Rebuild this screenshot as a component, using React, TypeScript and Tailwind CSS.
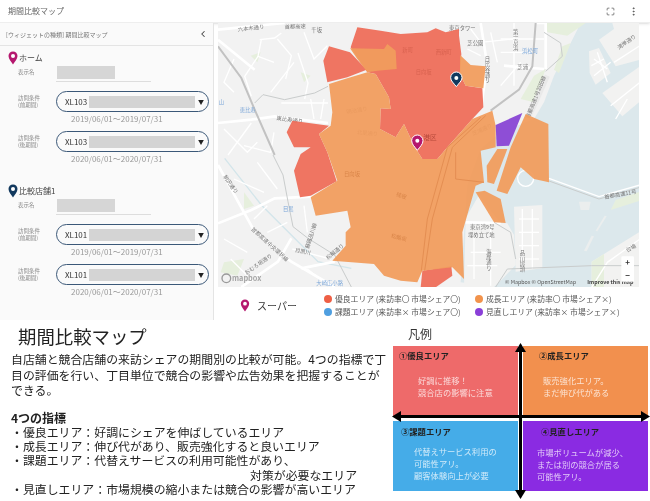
import { ChevronLeft, Maximize, MoreVertical } from "lucide-react";

const red = "#ee6c58";
const orange = "#f19c5c";

const redAreas = [
  "430,25 500,35 560,45 640,40 665,28 695,40 735,30 735,50 742,105 738,165 755,200 805,208 808,265 775,300 740,340 700,385 670,420 625,420 600,380 570,315 545,355 498,330 500,268 530,270 525,235 485,165 460,160 410,85",
  "345,82 408,100 458,152 400,175 340,190 328,125",
  "218,340 235,305 345,320 315,345 340,400 368,487 290,530 258,535 240,455 260,405 290,385 240,385",
  "625,755 712,742 715,770 665,805 620,805",
];

const orangeAreas = [
  "408,88 510,90 520,75 545,95 548,150 490,155 460,160 430,120",
  "738,108 770,138 815,142 808,208 755,200 738,165",
  "345,195 400,178 460,160 485,165 525,235 530,270 500,268 498,330 545,355 570,315 600,380 625,420 670,420 700,385 740,340 775,300 835,275 845,320 845,385 800,395 810,490 785,500 745,640 750,780 715,745 625,755 610,790 560,785 510,770 480,735 355,725 395,680 395,640 410,625 400,575 305,590 290,535 370,485 340,400 315,345 350,320 355,280",
  "935,285 1003,315 1005,490 960,480 920,445 880,525 848,515 890,385",
  "850,390 880,390 840,495 820,490 818,440",
  "785,520 812,515 860,540 875,612 840,610",
];

// thick white streets
const mainRoads = [
  "12,32 212,12",
  "12,312 112,302 182,292 342,312",
  "12,613 112,573 182,538 292,533",
  "12,438 72,548 122,638 232,728 362,804",
  "82,804 192,728 232,658",
  "965,12 995,12 995,150",
  "262,748 362,728",
  "12,62 122,152",
  "870,140 990,150",
  "755,610 860,612",
  "800,12 820,140 800,270",
];

// thin white side streets, just for the map's texture
const sideRoads = [
  "137,62 182,57 202,42",
  "132,112 92,172 112,232",
  "252,102 282,192 272,240",
  "202,252 342,252",
  "42,408 112,312",
  "142,62 132,112 180,130",
  "190,60 232,110 215,180",
  "270,40 300,120 340,80",
  "60,220 30,190 60,120",
  "180,340 170,400 90,380",
  "30,330 100,400 130,370",
  "290,240 300,300",
  "330,240 320,300",
  "240,130 170,220",
  "60,480 150,520",
  "30,660 100,700",
  "130,430 190,510",
  "120,600 160,560",
  "50,720 110,780",
  "160,640 220,610",
  "270,560 280,640",
  "235,690 350,720",
  "280,750 330,790",
  "860,60 990,60",
  "860,100 960,100",
  "900,12 900,200",
  "860,200 920,130",
  "770,30 800,70 900,60",
  "760,90 800,110",
  "830,40 850,130",
  "770,700 860,700",
  "780,650 780,780",
  "830,620 830,800",
  "760,740 850,740",
  "915,600 975,600",
  "915,640 975,640",
  "915,680 975,680",
  "915,720 975,720",
  "925,570 925,750",
  "955,570 955,750",
  "1005,478 1155,533 1278,498",
  "1140,120 1180,150",
  "1132,140 1170,120",
  "1140,170 1190,130",
  "1150,100 1180,190",
  "1130,810 1180,730 1278,660",
  "1200,130 1278,80",
  "1190,260 1278,190",
  "1205,300 1240,240",
];

const grayRoads = [
  "12,82 82,177 122,272 182,408",
  "965,12 955,142 915,212 830,275",
];

const thinGrayRoads = [
  "177,408 207,468 222,548 237,623 282,658 362,708 412,804",
  "122,252 147,227 212,242 302,222 342,202",
  "990,40 1040,72 1045,112 995,157",
  "845,804 880,750 1133,740 1278,740",
  "840,610 890,640 905,720",
  "1005,486 1155,540 1278,505",
];

const mapLabels: [string, number, number, number?][] = [
  ["六本木通り", 72, 38, -7],
  ["首都高速", 212, 30, -3],
  ["千坂", 292, 40],
  ["東比寿通り", 187, 302, 8],
  ["明治通り", 398, 285, -10],
  ["北里通り", 428, 345, 5],
  ["芝公園", 760, 78],
  ["東京タワー", 705, 32],
  ["芝浦", 910, 150],
  ["湾岸通り", 1215, 92, -35],
  ["首都高速11号", 1172, 540, -10],
  ["東京湾9号", 768, 630],
  ["埋め立て地", 762, 654],
  ["芝浦通り", 778, 350, -25],
  ["目黒川", 242, 698, 12],
  ["首都高速中央環状線", 110, 632, 42],
  ["蘇路品川線", 284, 690, -72],
  ["松輪通り", 342, 723, -40],
  ["駒沢通り", 27, 473, 55],
  ["おむろ坂通り", 97, 768, -35],
  ["首都高速1号羽田線", 945, 300, -68],
  ["台場", 1240, 700, -30],
];

const blueLabels: [string, number, number][] = [
  ["恵比寿", 77, 279],
  ["目黒", 207, 575],
  ["大崎広小路", 307, 798],
  ["浜松町", 924, 103],
  ["山", 14, 254],
];

const verticalLabels: [string, number, number][] = [
  ["第一京浜", 905, 30],
  ["海岸通り", 825, 690],
  ["品川埠頭", 925, 695],
  ["日比谷通り", 820, 112],
];

function Pin({ color, className }: { color: string; className: string }) {
  return (
    <svg viewBox="0 0 20 28" className={className}>
      <path
        d="M10 1C4.800 1 1 5 1 10c0 6 6 12 9 17 3-5 9-11 9-17 0-5-3.800-9-9-9z"
        fill={color}
      />
      <circle cx="10" cy="10" r="4" fill="#fff" />
    </svg>
  );
}

function Condition({
  label,
  code,
  date,
}: {
  label: string[];
  code: string;
  date: string;
}) {
  return (
    <div className="mt-[7px] pl-[18px] pr-[4px]">
      <div className="flex items-center">
        <div className="w-[38px] text-[5.500px] leading-[6.500px] text-[#888]">
          <div>{label[0]}</div>
          <div>{label[1]}</div>
        </div>
        <div className="flex h-[21px] w-[153px] items-center rounded-full border-[1.500px] border-[#3b5878] pl-[8px]">
          <span className="w-[24px] text-[8px] text-[#333]">{code}</span>
          <div className="h-[12px] w-[106px] bg-[#d4d4d4]" />
          <span className="ml-[3px] text-[6px] text-[#222]">▼</span>
        </div>
      </div>
      <div className="mt-[1px] pl-[53px] text-[8px] leading-[11px] text-[#999]">{date}</div>
    </div>
  );
}

function Store({
  name,
  color,
  code,
}: {
  name: string;
  color: string;
  code: string;
}) {
  return (
    <div>
      <div className="flex items-center pl-[8px]">
        <Pin color={color} className="h-[14px] w-[10px]" />
        <span className="ml-[1px] text-[8px] text-[#444]">{name}</span>
      </div>
      <div className="mt-[1px] flex items-center pl-[18px]">
        <span className="w-[39px] text-[5.500px] text-[#888]">表示名</span>
        <div className="h-[13px] w-[58px] bg-[#d6d6d6]" />
      </div>
      <div className="ml-[56px] mt-[2px] h-px w-[95px] bg-[#ddd]" />
      <div className="flex flex-col pt-[2px]">
        <Condition label={["訪問条件", "(前期間)"]} code={code} date="2019/06/01〜2019/07/31" />
        <Condition label={["訪問条件", "(後期間)"]} code={code} date="2020/06/01〜2020/07/31" />
      </div>
    </div>
  );
}

function MapView() {
  return (
    <svg viewBox="12 12 1263 792" className="block h-[264px] w-[421px]">
      <rect x="12" y="12" width="1263" height="792" fill="#f2f2f2" />
      <polygon
        points="1070,72 1100,12 1275,12 1275,804 840,804 740,790 760,500 800,390 860,340 960,300 990,250 1020,170"
        fill="#dce8ec"
      />
      <g fill="#f2f2f1">
        <polygon points="755,598 795,528 860,612 880,613 900,648 905,738 865,780 840,804 750,804" />
        <polygon points="900,563 985,558 985,748 905,758" />
        <polygon points="1133,728 1278,638 1278,804 1133,804" />
        <polygon points="1125,97 1155,87 1190,162 1145,197 1127,162" />
        <polygon points="1165,222 1278,142 1278,247 1225,292" />
        <polygon points="1155,62 1200,30 1195,12 1278,12 1278,122 1205,142" />
        <polygon points="1095,548 1130,548 1125,573 1100,573" fill="#ebeeee" />
        <polygon points="1145,635 1172,590 1178,592 1150,637" fill="#ebeeee" />
        <polygon points="1110,695 1133,650 1140,652 1118,697" fill="#ebeeee" />
      </g>
      <g fill="#e6efdd">
        <polygon points="995,12 1115,12 1060,50 1000,40" />
        <polygon points="1045,82 1070,72 1035,162 1020,152" />
        <polygon points="1190,573 1205,543 1278,518 1278,545" />
        <polygon points="1133,728 1170,705 1170,804 1133,804" />
        <polygon points="960,170 995,150 960,250 920,240" />
        <polygon points="30,730 90,720 70,770 20,760" />
        <polygon points="110,110 140,100 130,130" />
        <polygon points="260,160 290,170 270,190" />
        <polygon points="90,520 120,560 90,570" />
      </g>
      <polyline points="32,418 142,558 232,648 312,728 412,748" fill="none" stroke="#d3e5ea" strokeWidth="4" />
      {sideRoads.map((points) => (
        <polyline key={points} points={points} fill="none" stroke="#fff" strokeWidth="4" />
      ))}
      {mainRoads.map((points) => (
        <polyline key={points} points={points} fill="none" stroke="#fff" strokeWidth="8" />
      ))}
      {grayRoads.map((points) => (
        <polyline key={points} points={points} fill="none" stroke="#c2c2c2" strokeWidth="6" />
      ))}
      {thinGrayRoads.map((points) => (
        <polyline key={points} points={points} fill="none" stroke="#c9cccc" strokeWidth="3" />
      ))}
      <polyline points="1000,170 960,260 945,290" fill="none" stroke="#e9e9e9" strokeWidth="16" />
      <circle cx="935" cy="478" r="24" fill="#dce8ec" stroke="#fff" strokeWidth="4" />
      <g fontSize="16" fill="#777">
        {mapLabels.map(([text, x, y, rotate]) => (
          <text key={text} x={x} y={y} transform={rotate ? `rotate(${rotate} ${x} ${y})` : undefined}>
            {text}
          </text>
        ))}
        {verticalLabels.map(([text, x, y]) => (
          <text key={text} x={x} y={y} writingMode="vertical-rl">
            {text}
          </text>
        ))}
        {blueLabels.map(([text, x, y]) => (
          <text key={text} x={x} y={y} fill="#7ba6d8">
            {text}
          </text>
        ))}
      </g>
      <g fillOpacity="0.94">
        {redAreas.map((points) => (
          <polygon key={points} points={points} fill={red} />
        ))}
        {orangeAreas.map((points) => (
          <polygon key={points} points={points} fill={orange} />
        ))}
      </g>
      <polygon points="845,318 925,282 885,380 848,382" fill="#8e4ed6" />
      <g fill="none" stroke="#e48e52" strokeWidth="3">
        <polyline points="622,755 640,600 700,385 800,295" />
        <polyline points="632,755 655,600 715,385 815,290" />
        <polyline points="725,400 725,480 810,490" />
      </g>
      <text x="628" y="364" fontSize="20" fill="#b5483a">港区</text>
      <g fill="#d8624f" fontSize="16">
        <text x="565" y="100">新町</text>
        <text x="665" y="105">西新町</text>
        <text x="605" y="165">日向坂</text>
      </g>
      <g fill="#d98549" fontSize="16">
        <text x="390" y="470">日向坂</text>
        <text x="530" y="655" transform="rotate(15 530 655)">松輪坂</text>
        <text x="545" y="530" transform="rotate(20 545 530)">桂坂</text>
      </g>
      <path
        d="M610 394c-8-11-17-18-17-29a17 17 0 0 1 34 0c0 11-9 18-17 29z"
        fill="#b5176e"
        stroke="#fff"
        strokeWidth="3"
      />
      <circle cx="610" cy="365" r="6" fill="#fff" />
      <path
        d="M727 203c-8-11-17-17-17-27a17 17 0 0 1 34 0c0 10-9 16-17 27z"
        fill="#12395e"
        stroke="#fff"
        strokeWidth="3"
      />
      <circle cx="727" cy="177" r="6" fill="#fff" />
      <circle cx="37" cy="778" r="13" fill="none" stroke="#999" strokeWidth="4" />
      <text x="54" y="786" fontSize="22" fontWeight="700" fill="#a5a5a5">mapbox</text>
      <text x="873" y="796" fontSize="16" fill="#555">© Mapbox © OpenStreetMap</text>
      <text x="1120" y="796" fontSize="16" fontWeight="700" fill="#444">Improve this map</text>
      <rect x="1222" y="712" width="38" height="76" rx="4" fill="#fff" />
      <text x="1241" y="738" fontSize="24" textAnchor="middle" fontWeight="700" fill="#333">+</text>
      <text x="1241" y="776" fontSize="24" textAnchor="middle" fontWeight="700" fill="#333">−</text>
    </svg>
  );
}

function LegendItem({ color, text }: { color: string; text: string }) {
  return (
    <div className="flex items-center gap-[3px] whitespace-nowrap text-[7.800px] leading-[13px] text-[#555]">
      <span className="h-[8px] w-[8px] rounded-full" style={{ backgroundColor: color }} />
      {text}
    </div>
  );
}

function Quadrant({
  color,
  title,
  lines,
  titleClass,
  bodyClass,
}: {
  color: string;
  title: string;
  lines: string[];
  titleClass: string;
  bodyClass: string;
}) {
  return (
    <div className="h-[70px] w-[125px]" style={{ backgroundColor: color }}>
      <div className={`text-[8.300px] font-bold leading-[10px] text-[#222] ${titleClass}`}>{title}</div>
      <div className={`text-[8.300px] leading-[12px] text-white/75 ${bodyClass}`}>
        {lines.map((line) => (
          <div key={line}>{line}</div>
        ))}
      </div>
    </div>
  );
}

export default function App() {
  return (
    <div className="h-[501px] w-[650px] overflow-hidden bg-white font-['Noto_Sans_CJK_JP',sans-serif] blur-[0.35px]">
      <div className="flex h-[320px] flex-col">
        <div className="flex h-[23px] items-center justify-between border-b border-[#eee] pl-[8px] pr-[11px] shadow-sm">
          <span className="text-[8px] text-[#666]">期間比較マップ</span>
          <div className="flex items-center gap-[13px] text-[#555]">
            <Maximize size={9} />
            <MoreVertical size={11} />
          </div>
        </div>
        <div className="flex flex-1">
          <div className="w-[214px] border-r border-[#e4e4e4] bg-[#fafafa]">
            <div className="flex h-[23px] items-center justify-between border-b border-[#e4e4e4] pl-[6px] pr-[5px]">
              <span className="text-[6px] text-[#777]">[ウィジェットの種類] 期間比較マップ</span>
              <ChevronLeft size={10} className="text-[#444]" strokeWidth={2.500} />
            </div>
            <div className="pt-[5px]">
              <Store name="ホーム" color="#b5176e" code="XL103" />
            </div>
            <div className="pt-[20px]">
              <Store name="比較店舗1" color="#12395e" code="XL101" />
            </div>
          </div>
          <div className="ml-[4px] w-[421px]">
            <MapView />
            <div className="flex items-center pt-[5px]">
              <div className="ml-[22px] flex w-[84px] items-center">
                <Pin color="#b5176e" className="h-[13px] w-[10px]" />
                <span className="ml-[7px] text-[10px] text-[#333]">スーパー</span>
              </div>
              <div className="grid grid-cols-[151px_1fr]">
                <LegendItem color="#ee5f45" text="優良エリア (来訪率〇 市場シェア〇)" />
                <LegendItem color="#f2934c" text="成長エリア (来訪率〇 市場シェア×)" />
                <LegendItem color="#4f9fe0" text="課題エリア (来訪率× 市場シェア〇)" />
                <LegendItem color="#8a3fd8" text="見直しエリア (来訪率× 市場シェア×)" />
              </div>
            </div>
          </div>
        </div>
      </div>

      <div className="flex">
        <div className="w-[392px] pl-[11px] text-[#222]">
          <h1 className="pl-[7px] pt-[4px] text-[18.400px] leading-[24px]">期間比較マップ</h1>
          <p className="mt-[3px] whitespace-nowrap text-[11.900px] leading-[15.500px]">
            自店舗と競合店舗の来訪シェアの期間別の比較が可能。4つの指標で丁
            <br />
            目の評価を行い、丁目単位で競合の影響や広告効果を把握することが
            <br />
            できる。
          </p>
          <div className="mt-[12px] text-[12px] font-bold leading-[15px]">4つの指標</div>
          <ul className="text-[11.900px] leading-[14.400px]">
            <li>・優良エリア：好調にシェアを伸ばしているエリア</li>
            <li>・成長エリア：伸び代があり、販売強化すると良いエリア</li>
            <li>・課題エリア：代替えサービスの利用可能性があり、</li>
            <li className="pl-[239px]">対策が必要なエリア</li>
            <li>・見直しエリア：市場規模の縮小または競合の影響が高いエリア</li>
          </ul>
        </div>
        <div className="flex-1">
          <div className="pl-[16px] pt-[4px] pb-[2px] text-[12px] leading-[20px] text-[#333]">凡例</div>
          <div className="relative ml-[1px] w-[255px]">
            <div className="grid grid-cols-[125px_125px] gap-[5px]">
              <Quadrant
                color="#ee6a6a"
                title="①優良エリア"
                lines={["好調に推移！", "競合店の影響に注意"]}
                titleClass="pl-[6px] pt-[4px]"
                bodyClass="pl-[25px] pt-[14px]"
              />
              <Quadrant
                color="#f2904e"
                title="②成長エリア"
                lines={["販売強化エリア。", "まだ伸び代がある"]}
                titleClass="pl-[16px] pt-[4px]"
                bodyClass="pl-[20px] pt-[14px]"
              />
              <Quadrant
                color="#45ace8"
                title="③課題エリア"
                lines={["代替えサービス利用の", "可能性アリ。", "顧客体験向上が必要"]}
                titleClass="pl-[8px] pt-[5px]"
                bodyClass="pl-[21px] pt-[9px]"
              />
              <Quadrant
                color="#8a2be2"
                title="④見直しエリア"
                lines={["市場ボリュームが減少、", "または別の競合が居る", "可能性アリ。"]}
                titleClass="pl-[18px] pt-[5px]"
                bodyClass="pl-[14px] pt-[10px]"
              />
            </div>
            <svg viewBox="0 0 258 156" className="absolute left-[-1px] top-[-3px] h-[156px] w-[258px]">
              <g fill="#000">
                <rect x="127" y="5" width="3" height="146" />
                <rect x="6" y="72" width="246" height="3" />
                <polygon points="128.500,0 134,9 123,9" />
                <polygon points="128.500,156 134,147 123,147" />
                <polygon points="0,73.500 9,68 9,79" />
                <polygon points="258,73.500 249,68 249,79" />
              </g>
            </svg>
          </div>
        </div>
      </div>
    </div>
  );
}
